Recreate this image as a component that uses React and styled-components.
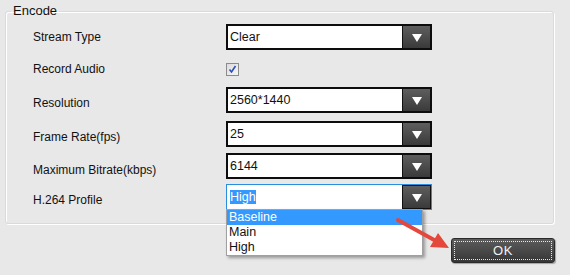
import React from "react";
import styled, { createGlobalStyle } from "styled-components";

const Global = createGlobalStyle`
  html, body { margin: 0; padding: 0; background: #e8e8e8; }
  body { font-family: "Liberation Sans", Arial, sans-serif; font-size: 12px; color: #111; }
`;

const Page = styled.div`
  position: relative;
  width: 570px;
  height: 275px;
  padding: 4px 0 0 5px;
  box-sizing: border-box;
  overflow: hidden;
`;

const Group = styled.fieldset`
  width: 549px;
  box-sizing: border-box;
  margin: 0;
  padding: 6px 0 13px 27px;
  border: 1px solid #d2dce4;
  border-radius: 3px;
  box-shadow: inset 1px 1px 0 #fff, 1px 1px 0 #fff;
`;

const Legend = styled.legend`
  margin-left: -22px;
  padding: 0 2px;
  font-size: 13px;
  line-height: 14px;
  color: #111;
`;

const Row = styled.div`
  position: relative;
  display: flex;
  align-items: center;
  height: 26px;
  margin-top: ${(p) => p.$mt || 0}px;
`;

const Label = styled.div`
  width: 193px;
  font-size: 12px;
  color: #111;
  transform: translateY(${(p) => p.$dy || 0}px);
`;

const Select = styled.div`
  display: flex;
  width: 206px;
  height: 26px;
  box-sizing: border-box;
  border: ${(p) => (p.$focus ? "1px solid #2a8ee0" : "2px solid #0d0d0d")};
  background: #fff;
`;

const Value = styled.div`
  flex: 1;
  padding: ${(p) => (p.$focus ? "5px 0 0 3px" : "4px 0 0 2px")};
  font-size: 12.5px;
  line-height: 14px;
  color: #111;
`;

const Highlight = styled.span`
  background: #3399ff;
  color: #fff;
`;

const DropBtn = styled.div`
  width: 27px;
  display: flex;
  align-items: center;
  justify-content: center;
  background: linear-gradient(#5e5e5e, #3a3a3a);
  border-left: 1px solid #111;
  ${(p) => p.$focus && "border: 1px solid #111; margin: 0;"}
`;

const Tri = styled.div`
  width: 0;
  height: 0;
  border-left: 5px solid transparent;
  border-right: 5px solid transparent;
  border-top: 8px solid #fff;
  margin-top: 1px;
`;

const Check = styled.div`
  width: 13px;
  height: 13px;
  box-sizing: border-box;
  border: 1px solid #8b8b8b;
  background: linear-gradient(135deg, #dcdcdc, #f6f6f6);
  display: flex;
  align-items: center;
  justify-content: center;
`;

const List = styled.div`
  position: absolute;
  left: 193px;
  top: 25px;
  width: 197px;
  box-sizing: border-box;
  border: 1px solid #a0a0a0;
  background: #fff;
  box-shadow: 2px 2px 3px rgba(0, 0, 0, 0.35);
  z-index: 2;
`;

const Item = styled.div`
  height: 15px;
  line-height: 15px;
  padding-left: 2px;
  font-size: 12.5px;
  background: ${(p) => (p.$sel ? "#3399ff" : "#fff")};
  color: ${(p) => (p.$sel ? "#fff" : "#111")};
`;

const Footer = styled.div`
  display: flex;
  justify-content: flex-end;
  width: 549px;
  margin-top: 14px;
`;

const OkButton = styled.button`
  width: 104px;
  height: 25px;
  padding: 2px;
  border: 1px solid #2a2a2a;
  border-radius: 3px;
  background: linear-gradient(#5c5c5c, #363636);
  box-shadow: 1px 1px 1px rgba(0, 0, 0, 0.3);
  cursor: pointer;
  margin-right: -1px;
`;

const OkInner = styled.div`
  height: 100%;
  box-sizing: border-box;
  border: 1px dotted #e8e8e8;
  display: flex;
  align-items: center;
  justify-content: center;
  font-family: "Liberation Sans", Arial, sans-serif;
  font-size: 13px;
  color: #f2f2f2;
  letter-spacing: 0.5px;
`;

const Arrow = styled.svg`
  position: absolute;
  left: 0;
  top: 0;
  pointer-events: none;
  z-index: 3;
`;

function Dropdown({ value, focus, highlight }) {
  return (
    <Select $focus={focus}>
      <Value $focus={focus}>{highlight ? <Highlight>{value}</Highlight> : value}</Value>
      <DropBtn $focus={focus}>
        <Tri />
      </DropBtn>
    </Select>
  );
}

export default function App() {
  return (
    <>
      <Global />
      <Page>
        <Group>
          <Legend>Encode</Legend>
          <Row>
            <Label $dy={0}>Stream Type</Label>
            <Dropdown value="Clear" />
          </Row>
          <Row $mt={6}>
            <Label $dy={0}>Record Audio</Label>
            <Check>
              <svg width="9" height="9" viewBox="0 0 9 9">
                <path d="M1.5 4.5 L3.5 7 L7.5 1" fill="none" stroke="#2c4fb8" strokeWidth="1.6" />
              </svg>
            </Check>
          </Row>
          <Row $mt={5}>
            <Label $dy={3}>Resolution</Label>
            <Dropdown value="2560*1440" />
          </Row>
          <Row $mt={8}>
            <Label $dy={3}>Frame Rate(fps)</Label>
            <Dropdown value="25" />
          </Row>
          <Row $mt={6}>
            <Label $dy={4}>Maximum Bitrate(kbps)</Label>
            <Dropdown value="6144" />
          </Row>
          <Row $mt={5}>
            <Label $dy={3}>H.264 Profile</Label>
            <Dropdown value="High" focus highlight />
            <List>
              <Item $sel>Baseline</Item>
              <Item>Main</Item>
              <Item>High</Item>
            </List>
          </Row>
        </Group>
        <Footer>
          <OkButton>
            <OkInner>OK</OkInner>
          </OkButton>
        </Footer>
        <Arrow width="570" height="275" viewBox="0 0 570 275">
          <line x1="398" y1="220" x2="436" y2="241" stroke="#e4473b" strokeWidth="4" strokeLinecap="round" />
          <polygon points="449,248 430,247 438,233" fill="#e4473b" />
        </Arrow>
      </Page>
    </>
  );
}
